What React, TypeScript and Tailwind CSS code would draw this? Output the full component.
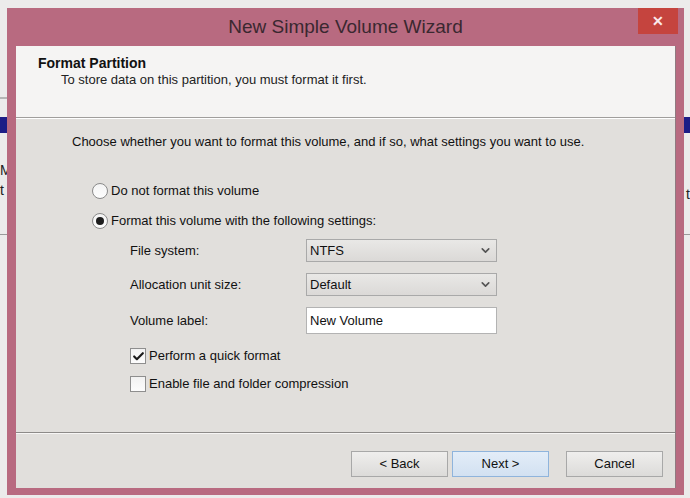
import { ChevronDown, Check } from 'lucide-react';

const font = { fontFamily: '"Liberation Sans", Arial, sans-serif' };

function Radio({ checked, label }: { checked?: boolean; label: string }) {
  return (
    <div className="flex h-[20px] items-center">
      <span className="flex h-[16px] w-[16px] items-center justify-center rounded-full border border-[#8a8a8a] bg-gradient-to-b from-[#f4f4f4] to-[#fdfdfd]">
        {checked && <span className="h-[8px] w-[8px] rounded-full bg-[#1e1e1e]" />}
      </span>
      <span className="ml-[3px] text-[13px] text-[#111]">{label}</span>
    </div>
  );
}

function Checkbox({ checked, label }: { checked?: boolean; label: string }) {
  return (
    <div className="flex h-[20px] items-center">
      <span className="flex h-[16px] w-[16px] items-center justify-center border border-[#8e8e8e] bg-gradient-to-b from-[#f2f2f2] to-[#fcfcfc]">
        {checked && <Check className="h-[13px] w-[13px] text-[#1a1a1a]" strokeWidth={4} />}
      </span>
      <span className="ml-[3px] text-[13px] text-[#111]">{label}</span>
    </div>
  );
}

function Select({ value }: { value: string }) {
  return (
    <div className="flex h-[23px] w-[191px] items-center justify-between border border-[#a9a9a9] bg-gradient-to-b from-[#e9e8e6] to-[#dbd9d7] pl-[3px] pr-[4px] text-[13px] text-[#111]">
      <span>{value}</span>
      <ChevronDown className="h-[13px] w-[13px] text-[#555]" strokeWidth={3} />
    </div>
  );
}

function Button({ label, primary }: { label: string; primary?: boolean }) {
  return (
    <button
      className={`flex h-[26px] w-[97px] items-center justify-center border text-[13px] text-[#111] ${
        primary
          ? 'border-[#8fb4dc] bg-gradient-to-b from-[#e3edf8] to-[#d2e1f1]'
          : 'border-[#a8a8a8] bg-gradient-to-b from-[#efeeed] to-[#dcdbd9]'
      }`}
    >
      {label}
    </button>
  );
}

export default function App() {
  return (
    <div className="relative h-[498px] w-[690px] overflow-hidden bg-[#ecebeb]" style={font}>
      {/* bits of the window behind */}
      <div className="absolute left-0 top-[117px] h-[16px] w-[7px] bg-[#1d1d86]" />
      <div className="absolute right-0 top-[117px] h-[16px] w-[6px] bg-[#1d1d86]" />
      <div className="absolute left-0 top-[97px] h-[2px] w-[7px] bg-[#b5b5b5]" />
      <div className="absolute left-0 top-[162px] w-[7px] overflow-hidden text-[14px] leading-[16px] text-[#222]">M</div>
      <div className="absolute left-0 top-[182px] text-[14px] leading-[16px] text-[#222]">t</div>
      <div className="absolute left-0 top-[234px] h-px w-[7px] bg-[#9a9a9a]" />
      <div className="absolute right-0 top-[186px] text-[14px] leading-[16px] text-[#222]">t</div>
      <div className="absolute right-0 top-[234px] h-px w-[6px] bg-[#9a9a9a]" />

      <div className="ml-[7px] mt-[8px] flex h-[487px] w-[677px] flex-col bg-[#b86a80]">
        {/* title bar */}
        <div className="relative flex h-[38px] items-center justify-center">
          <span className="pt-[1px] text-[19px] text-[#3a2830]">New Simple Volume Wizard</span>
          <div className="absolute right-[6px] top-0 flex h-[26px] w-[40px] items-center justify-center bg-[#c5443e] text-[14px] font-bold text-[#fbeaea]">
            ✕
          </div>
        </div>

        {/* client area */}
        <div className="ml-[9px] mr-[8px] flex flex-1 flex-col border-r border-[#8f7a80]">
          <div className="flex h-[71px] flex-col bg-[#f5f4f3] pl-[22px] pt-[9px]">
            <span className="text-[14px] font-bold leading-[17px] text-[#111]">Format Partition</span>
            <span className="ml-[23px] text-[13px] leading-[16px] text-[#222]">
              To store data on this partition, you must format it first.
            </span>
          </div>
          <div className="h-px bg-[#a09e9c]" />
          <div className="h-px bg-[#ffffff]" />

          <div className="flex flex-1 flex-col bg-[#e1dfdc]">
            <div className="pl-[56px] pt-[15px] text-[13px] leading-[16px] text-[#111]">
              Choose whether you want to format this volume, and if so, what settings you want to use.
            </div>

            <div className="mt-[31px] flex flex-col gap-[10px] pl-[76px]">
              <Radio label="Do not format this volume" />
              <Radio checked label="Format this volume with the following settings:" />
            </div>

            <div className="mt-[8px] grid grid-cols-[176px_191px] items-center gap-y-[11px] pl-[114px] text-[13px] text-[#111]">
              <span>File system:</span>
              <Select value="NTFS" />
              <span>Allocation unit size:</span>
              <Select value="Default" />
              <span>Volume label:</span>
              <div className="flex h-[27px] items-start border border-[#b3b3b3] bg-white px-[3px] pt-[3px]">
                New Volume
              </div>
            </div>

            <div className="mt-[12px] flex flex-col gap-[8px] pl-[114px]">
              <Checkbox checked label="Perform a quick format" />
              <Checkbox label="Enable file and folder compression" />
            </div>

            <div className="mt-auto">
              <div className="h-px bg-[#8d8b89]" />
              <div className="h-px bg-[#f7f6f5]" />
              <div className="flex h-[54px] items-start pl-[335px] pt-[17px]">
                <Button label="< Back" />
                <div className="w-[4px]" />
                <Button label="Next >" primary />
                <div className="w-[17px]" />
                <Button label="Cancel" />
              </div>
            </div>
          </div>
        </div>
        <div className="h-[7px]" />
      </div>
    </div>
  );
}
